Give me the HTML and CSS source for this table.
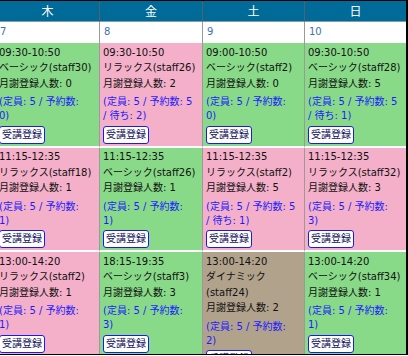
FILE: index.html
```html
<!DOCTYPE html>
<html lang="ja">
<head>
<meta charset="utf-8">
<link rel="stylesheet" href="styles.css">
</head>
<body>
<div class="frame">
  <div class="cal">
    <div class="head">木</div>
    <div class="head">金</div>
    <div class="head">土</div>
    <div class="head">日</div>

    <div class="date">7</div>
    <div class="date">8</div>
    <div class="date">9</div>
    <div class="date">10</div>

    <div class="slot green">
      <div class="line">09:30-10:50</div>
      <div class="line">ベーシック(staff30)</div>
      <div class="line">月謝登録人数: 0</div>
      <div class="cap">(定員: 5 / 予約数:<br>0)</div>
      <button class="btn">受講登録</button>
    </div>
    <div class="slot pink">
      <div class="line">09:30-10:50</div>
      <div class="line">リラックス(staff26)</div>
      <div class="line">月謝登録人数: 2</div>
      <div class="cap">(定員: 5 / 予約数: 5<br>/ 待ち: 2)</div>
      <button class="btn">受講登録</button>
    </div>
    <div class="slot green">
      <div class="line">09:00-10:50</div>
      <div class="line">ベーシック(staff2)</div>
      <div class="line">月謝登録人数: 0</div>
      <div class="cap">(定員: 5 / 予約数:<br>0)</div>
      <button class="btn">受講登録</button>
    </div>
    <div class="slot green">
      <div class="line">09:30-10:50</div>
      <div class="line">ベーシック(staff28)</div>
      <div class="line">月謝登録人数: 5</div>
      <div class="cap">(定員: 5 / 予約数: 5<br>/ 待ち: 1)</div>
      <button class="btn">受講登録</button>
    </div>

    <div class="slot pink">
      <div class="line">11:15-12:35</div>
      <div class="line">リラックス(staff18)</div>
      <div class="line">月謝登録人数: 1</div>
      <div class="cap">(定員: 5 / 予約数:<br>1)</div>
      <button class="btn">受講登録</button>
    </div>
    <div class="slot green">
      <div class="line">11:15-12:35</div>
      <div class="line">ベーシック(staff26)</div>
      <div class="line">月謝登録人数: 1</div>
      <div class="cap">(定員: 5 / 予約数:<br>1)</div>
      <button class="btn">受講登録</button>
    </div>
    <div class="slot pink">
      <div class="line">11:15-12:35</div>
      <div class="line">リラックス(staff2)</div>
      <div class="line">月謝登録人数: 5</div>
      <div class="cap">(定員: 5 / 予約数: 5<br>/ 待ち: 1)</div>
      <button class="btn">受講登録</button>
    </div>
    <div class="slot pink">
      <div class="line">11:15-12:35</div>
      <div class="line">リラックス(staff32)</div>
      <div class="line">月謝登録人数: 3</div>
      <div class="cap">(定員: 5 / 予約数:<br>3)</div>
      <button class="btn">受講登録</button>
    </div>

    <div class="slot pink">
      <div class="line">13:00-14:20</div>
      <div class="line">リラックス(staff2)</div>
      <div class="line">月謝登録人数: 1</div>
      <div class="cap">(定員: 5 / 予約数:<br>1)</div>
      <button class="btn">受講登録</button>
    </div>
    <div class="slot green">
      <div class="line">18:15-19:35</div>
      <div class="line">ベーシック(staff3)</div>
      <div class="line">月謝登録人数: 3</div>
      <div class="cap">(定員: 5 / 予約数:<br>3)</div>
      <button class="btn">受講登録</button>
    </div>
    <div class="slot brown">
      <div class="line">13:00-14:20</div>
      <div class="line">ダイナミック<br>(staff24)</div>
      <div class="line">月謝登録人数: 2</div>
      <div class="cap">(定員: 5 / 予約数:<br>2)</div>
      <button class="btn">受講登録</button>
    </div>
    <div class="slot green">
      <div class="line">13:00-14:20</div>
      <div class="line">ベーシック(staff34)</div>
      <div class="line">月謝登録人数: 1</div>
      <div class="cap">(定員: 5 / 予約数:<br>1)</div>
      <button class="btn">受講登録</button>
    </div>
  </div>
</div>
</body>
</html>
```

FILE: styles.css
```css
html, body {
  margin: 0;
  padding: 0;
  background: #ffffff;
}

body {
  font-family: "DejaVu Sans", "Noto Sans CJK JP", sans-serif;
  font-size: 10px;
  color: #111111;
}

.frame {
  width: 406px;
  height: 353px;
  border-top: 1px solid #000000;
  border-bottom: 1px solid #000000;
  border-right: 2px solid #000000;
  overflow: hidden;
}

.cal {
  display: grid;
  grid-template-columns: 104px 103px 102px 101px;
  margin-left: -4px;
  width: 410px;
}

.cal > div {
  border-right: 1px solid #9a9a9a;
}

.cal > div:nth-child(4n) {
  border-right: none;
}

.head {
  height: 20px;
  line-height: 20px;
  background: #006b98;
  color: #ffffff;
  text-align: center;
  font-size: 12px;
  font-family: "Noto Sans CJK JP", sans-serif;
  border-bottom: 1px solid #8a9aa2;
}

.cal > .head {
  border-right-color: #4d6470;
}

.date {
  height: 21px;
  box-sizing: border-box;
  padding: 3px 3px 0 4px;
  line-height: 13px;
  color: #3d72a8;
  background: #ffffff;
}

.slot {
  padding: 1.5px 2px 2px 3px;
  border-bottom: 2px solid #ffffff;
}

.green {
  background: #88da88;
}

.pink {
  background: #f4afc9;
}

.brown {
  background: #b1a28c;
}

.line {
  line-height: 15.5px;
  white-space: nowrap;
}

.cap {
  margin-top: 4px;
  line-height: 14px;
  color: #1c1cff;
  white-space: nowrap;
}

.btn {
  display: block;
  margin: 2.5px 0 0 0;
  height: 18px;
  box-sizing: border-box;
  padding: 0 2px;
  font-family: "DejaVu Sans", "Noto Sans CJK JP", sans-serif;
  font-size: 10px;
  line-height: 14px;
  color: #101060;
  background: #ffffff;
  border: 1px solid #1a1aee;
  border-radius: 3px;
}
```
